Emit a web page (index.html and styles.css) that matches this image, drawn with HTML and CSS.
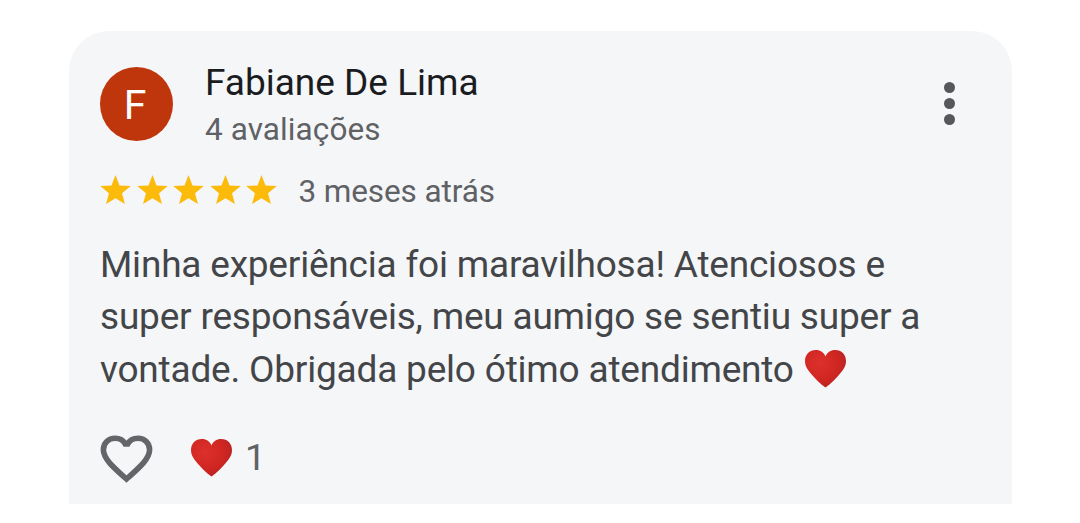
FILE: index.html
```html
<!DOCTYPE html>
<html lang="pt-BR">
<head>
    <meta charset="UTF-8">
    <meta name="viewport" content="width=device-width, initial-scale=1.0">
    <title>Avaliação</title>
    <link rel="stylesheet" href="styles.css">
</head>
<body>
    <svg width="0" height="0" class="defs">
        <defs>
            <radialGradient id="heartFill" cx="0.35" cy="0.35" r="0.75">
                <stop offset="0" stop-color="#dc302b"/>
                <stop offset="0.6" stop-color="#d02622"/>
                <stop offset="1" stop-color="#b32224"/>
            </radialGradient>
            <symbol id="star" viewBox="2 2 20 19">
                <path d="M12 17.27 18.18 21l-1.9-7.1L22 9.24l-7.4-.4L12 2 9.4 8.84 2 9.24l5.72 4.66L5.82 21z"/>
            </symbol>
            <symbol id="heart" viewBox="0 0 41 38">
                <path fill="url(#heartFill)" d="M20.5 37.5C18 36 13 31.5 8 26C3 20.5 0 16.5 0 11C0 4.5 4.5 0 10.8 0C15.5 0 19 2.5 20.5 6.5C22 2.5 25.5 0 30.2 0C36.5 0 41 4.5 41 11C41 16.5 38 20.5 33 26C28 31.5 23 36 20.5 37.5z"/>
            </symbol>
        </defs>
    </svg>
    <article class="review">
        <header class="review-header">
            <div class="avatar">F</div>
            <div class="author">
                <h1 class="name">Fabiane De Lima</h1>
                <p class="count">4 avaliações</p>
            </div>
            <div class="menu">
                <span></span>
                <span></span>
                <span></span>
            </div>
        </header>
        <div class="rating">
            <div class="stars">
                <svg><use href="#star"/></svg>
                <svg><use href="#star"/></svg>
                <svg><use href="#star"/></svg>
                <svg><use href="#star"/></svg>
                <svg><use href="#star"/></svg>
            </div>
            <span class="date">3 meses atrás</span>
        </div>
        <p class="text">
            <span class="line">Minha experiência foi maravilhosa! Atenciosos e</span>
            <span class="line">super responsáveis, meu aumigo se sentiu super a</span>
            <span class="line">vontade. Obrigada pelo ótimo atendimento <svg class="heart"><use href="#heart"/></svg></span>
        </p>
        <footer class="reactions">
            <svg class="like" viewBox="0 0 53 48">
                <path d="M26.5 44C16 34.500 3.400 24.500 3.400 14.800C3.400 8 8.500 3.200 15 3.200C19.500 3.200 23.500 5.500 25.300 9H27.700C29.500 5.500 33.500 3.200 38 3.200C44.500 3.200 49.600 8 49.600 14.800C49.600 24.500 37 34.500 26.5 44z"/>
            </svg>
            <svg class="heart"><use href="#heart"/></svg>
            <span class="likes">1</span>
        </footer>
    </article>
</body>
</html>
```
FILE: styles.css
```css
* {
    margin: 0;
    padding: 0;
    box-sizing: border-box;
}
body {
    font-family: Roboto, "Liberation Sans", sans-serif;
    background-color: #fff;
    color: #5f6165;
    padding: 31px 68px 0 69px;
}
.defs {
    display: block;
}
.review {
    height: 473px;
    padding: 36px 57px 0 31px;
    background-color: #f4f6f8;
    border-radius: 40px 40px 0 0;
}
.review-header {
    display: flex;
    height: 76px;
}
.avatar {
    width: 73px;
    height: 74px;
    border-radius: 50%;
    background-color: #bf360c;
    color: #fff;
    font-size: 41px;
    line-height: 77px;
    text-align: center;
    padding-right: 3px;
}
.author {
    flex: 1;
    margin-left: 32px;
}
.name {
    font-size: 37px;
    font-weight: 400;
    line-height: 32px;
    color: #1b1c1f;
}
.count {
    font-size: 31.5px;
    line-height: 32px;
    letter-spacing: 0.1px;
    margin-top: 15px;
}
.menu {
    display: flex;
    flex-direction: column;
    gap: 5px;
    padding-top: 15px;
}
.menu span {
    width: 11px;
    height: 11px;
    border-radius: 50%;
    background-color: #55575a;
}
.rating {
    display: flex;
    align-items: center;
    height: 36px;
    margin-top: 30px;
}
.stars {
    display: flex;
    gap: 5.6px;
    margin-top: -3px;
}
.stars svg {
    width: 31px;
    height: 29px;
    fill: #fcba0b;
}
.date {
    font-size: 31.5px;
    letter-spacing: -0.1px;
    margin-left: 21px;
}
.text {
    margin-top: 30px;
    color: #434548;
    font-size: 37px;
    line-height: 52.3px;
    letter-spacing: -0.2px;
}
.line {
    display: block;
    white-space: nowrap;
}
.heart {
    width: 41px;
    height: 38px;
}
.text .heart {
    vertical-align: -6px;
    margin-left: 2px;
}
.reactions {
    display: flex;
    align-items: center;
    height: 50px;
    margin-top: 38px;
}
.like {
    width: 53px;
    height: 48px;
    fill: none;
    stroke: #636568;
    stroke-width: 5.6px;
}
.reactions .heart {
    margin: -2px 0 0 38px;
}
.likes {
    font-size: 37px;
    margin: -3px 0 0 13px;
}
```
